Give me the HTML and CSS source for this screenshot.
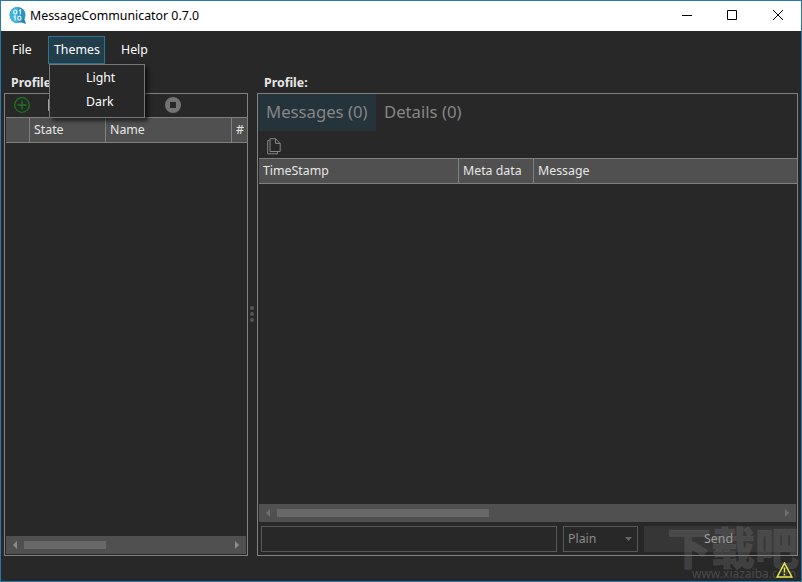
FILE: index.html
```
<!DOCTYPE html>
<html lang="en">
	<head>
		<meta charset="utf-8">
		<title>MessageCommunicator 0.7.0</title>
		<link rel="stylesheet" href="styles.css">
	</head>
	<body>
		<div class="window">
			<div class="titlebar">
				<svg class="logo" width="18" height="18" viewBox="0 0 18 18">
					<circle cx="8.5" cy="8" r="8" fill="#2d93c4"/>
					<path d="M1 10a8 8 0 0 1 8-10v16a8 8 0 0 1-8-6z" fill="#45b5dc"/>
					<path d="M11 15l6 2-2-6z" fill="#2783b5"/>
					<g fill="none" stroke="#e6f6fb" stroke-width="1.2">
						<ellipse cx="6.3" cy="5" rx="1.6" ry="2"/>
						<path d="M10 3.6l1.3-.7v4.6M4.8 9.6l1.3-.7v4.6"/>
						<ellipse cx="10.4" cy="11.2" rx="1.6" ry="2"/>
					</g>
				</svg>
				<span class="title">MessageCommunicator 0.7.0</span>
				<svg class="controls" width="104" height="12" viewBox="0 0 104 12" fill="none" stroke="#000">
					<path d="M0 6.5h10M45.500 1.500h9v9h-9zM91 1l10 10M101 1l-10 10"/>
				</svg>
			</div>
			<div class="menubar">
				<div class="menu file">File</div>
				<div class="menu themes open">Themes
					<div class="popup">
						<div>Light</div>
						<div>Dark</div>
					</div>
				</div>
				<div class="menu help">Help</div>
			</div>
			<div class="main">
				<div class="side">
					<div class="heading">Profiles:</div>
					<div class="panel">
						<div class="toolbar">
							<svg width="16" height="16" viewBox="0 0 16 16" fill="none" stroke="#1b781f" stroke-width="1.300">
								<circle cx="8" cy="8" r="7.300"/>
								<path d="M8 3.500v9M3.500 8h9"/>
							</svg>
							<svg width="12" height="14" viewBox="0 0 12 14" fill="none" stroke="#aaa">
								<path d="M1.500 1.500h9v11h-9z"/>
							</svg>
							<svg class="play" width="14" height="14" viewBox="0 0 14 14">
								<path d="M0 0l14 7-14 7z" fill="#176b1c"/>
							</svg>
							<svg class="stop" width="16" height="16" viewBox="0 0 16 16">
								<path d="M8 0a8 8 0 1 0 0 16A8 8 0 0 0 8 0zM5 5h6v6H5z" fill="#737373" fill-rule="evenodd"/>
							</svg>
						</div>
						<div class="row profiles">
							<span></span><span>State</span><span>Name</span><span>#</span>
						</div>
						<div class="fill"></div>
						<div class="scroll">
							<svg width="4" height="8"><path d="M4 0v8L0 4z"/></svg>
							<div class="track"><div class="thumb"></div></div>
							<svg width="4" height="8"><path d="M0 0v8l4-4z"/></svg>
						</div>
					</div>
				</div>
				<div class="splitter"><i></i><i></i><i></i></div>
				<div class="content">
					<div class="heading">Profile:</div>
					<div class="panel">
						<div class="tabs">
							<div class="tab active">Messages (0)</div>
							<div class="tab">Details (0)</div>
						</div>
						<div class="tools">
							<svg width="14" height="17" viewBox="0 0 14 17" fill="none" stroke="#858585">
								<path d="M3 .7h5.500l4.700 4.700v8.100H3zM8.500.7v4.700h4.700M2.500 2.500H.7v13.300h9.800v-2"/>
							</svg>
						</div>
						<div class="row messages">
							<span>TimeStamp</span><span>Meta data</span><span>Message</span>
						</div>
						<div class="fill"></div>
						<div class="scroll dim">
							<svg width="4" height="8"><path d="M4 0v8L0 4z"/></svg>
							<div class="track"><div class="thumb"></div></div>
							<svg width="4" height="8"><path d="M0 0v8l4-4z"/></svg>
						</div>
						<div class="sendbar">
							<div class="input"></div>
							<div class="select">Plain
								<svg width="7" height="4"><path d="M0 0h7L3.500 4z" fill="#666"/></svg>
							</div>
							<div class="send">Send</div>
						</div>
					</div>
				</div>
			</div>
			<div class="watermark">
				<div class="mark">下载吧</div>
				<div class="url">www.xiazaiba.com</div>
			</div>
			<svg class="warning" width="17" height="16" viewBox="0 0 17 16" fill="none" stroke="#e6e650" stroke-width="1.500">
				<path d="M8.500 1.200l7.400 13.800H1.100zM8.500 5.500v5M8.500 11.800v1.600"/>
			</svg>
		</div>
	</body>
</html>
```
FILE: styles.css
```
* {
	box-sizing: border-box;
}
body {
	margin: 0;
	font-family: "Noto Sans", "Noto Sans CJK SC", sans-serif;
	font-size: 12.35px;
	color: #e6e6e6;
}
svg {
	display: block;
	flex: none;
}
.window {
	position: relative;
	display: flex;
	flex-direction: column;
	width: 802px;
	height: 582px;
	background: #282828;
	border: 1px solid #2b79aa;
	overflow: hidden;
}
.titlebar {
	display: flex;
	align-items: center;
	height: 30px;
	padding: 0 15px 2px 8px;
	background: #fff;
	color: #000;
}
.logo {
	margin-top: 1px;
}
.title {
	margin-left: 3px;
}
.controls {
	margin-left: auto;
}
.menubar {
	display: flex;
	height: 38px;
	padding: 5px 0 0 5px;
	color: #fff;
}
.menu {
	position: relative;
	height: 28px;
	line-height: 26px;
	padding: 0 5px;
	border: 1px solid transparent;
	white-space: nowrap;
}
.file {
	width: 42px;
}
.themes {
	width: 57px;
}
.help {
	margin-left: 10px;
}
.open {
	background: #233e4b;
	border-color: #307590;
}
.popup {
	position: absolute;
	z-index: 2;
	left: 0;
	top: 27px;
	width: 96px;
	height: 54px;
	padding: 1px 0 0 36px;
	line-height: 24px;
	background: #282828;
	border: 1px solid #777;
	box-shadow: 3px 3px 4px rgba(0, 0, 0, .6);
}
.main {
	display: flex;
	flex: 1;
	padding: 0 3px 25px;
}
.side, .content {
	display: flex;
	flex-direction: column;
}
.side {
	width: 244px;
}
.content {
	flex: 1;
}
.heading {
	height: 24px;
	padding-left: 7px;
	line-height: 27px;
	font-weight: bold;
}
.panel {
	display: flex;
	flex: 1;
	flex-direction: column;
	border: 1px solid #808080;
}
.toolbar {
	display: flex;
	align-items: center;
	height: 23px;
	padding: 0 0 2px 9px;
	gap: 17px;
}
.play {
	margin-left: 55px;
}
.stop {
	margin-left: 3px;
}
.row {
	display: grid;
	height: 26px;
	line-height: 24px;
	margin: 0 0 0 1px;
	background: #505050;
	border: solid #808080;
	border-width: 1px 0;
}
.row span {
	padding-left: 4px;
	border-right: 1px solid #808080;
}
.row span:last-child {
	border-right: 0;
}
.profiles {
	grid-template-columns: 24px 76px 126px 1fr;
}
.messages {
	grid-template-columns: 200px 75px 1fr;
}
.fill {
	flex: 1;
}
.scroll {
	display: flex;
	align-items: center;
	height: 18px;
	margin: 0 1px 1px;
	padding: 0 7px;
	background: #505050;
	fill: #8c8c8c;
}
.track {
	flex: 1;
	margin: 0 7px;
}
.thumb {
	width: 82px;
	height: 8px;
	background: #686868;
}
.dim {
	margin-bottom: 4px;
	fill: #707070;
}
.dim .thumb {
	width: 212px;
}
.splitter {
	display: flex;
	flex-direction: column;
	align-items: center;
	justify-content: center;
	gap: 2px;
	width: 9px;
	padding: 3px 2px 0 0;
}
.splitter i {
	width: 4px;
	height: 4px;
	border-radius: 50%;
	background: #555;
}
.tabs {
	display: flex;
	height: 37px;
	font-size: 16.7px;
	line-height: 36px;
	color: #868686;
	white-space: nowrap;
}
.tab {
	padding: 0 8px;
}
.active {
	width: 118px;
	background: #25333a;
}
.tools {
	height: 27px;
	padding: 7px 0 0 9px;
}
.sendbar {
	display: flex;
	gap: 6px;
	height: 29px;
	padding: 0 1px 3px 3px;
	line-height: 25px;
	color: #8a8a8a;
}
.input, .select {
	border: 1px solid #585858;
}
.input {
	width: 296px;
}
.select {
	display: flex;
	justify-content: space-between;
	align-items: center;
	width: 75px;
	padding: 0 5px 1px 4px;
}
.send {
	flex: 1;
	padding-right: 3px;
	background: #363636;
	color: #a2a2a2;
	text-align: center;
}
.watermark {
	position: absolute;
	right: 0;
	bottom: 0;
	width: 134px;
	height: 56px;
	color: rgba(125, 125, 125, .28);
}
.mark {
	height: 43px;
	font: 900 44px/42px "Noto Sans CJK SC", sans-serif;
	white-space: nowrap;
	-webkit-text-stroke: 1px rgba(130, 130, 130, .15);
}
.url {
	padding-left: 25px;
	font-size: 12px;
	line-height: 12px;
	color: rgba(130, 130, 130, .4);
}
.warning {
	position: absolute;
	right: 8px;
	bottom: 3px;
}
```
